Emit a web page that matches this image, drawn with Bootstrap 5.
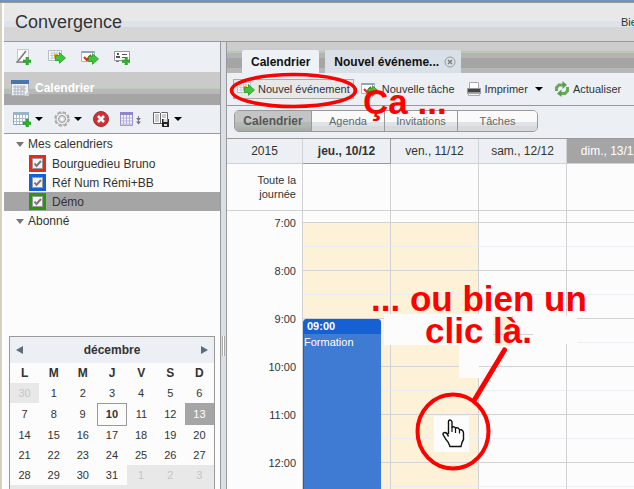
<!DOCTYPE html>
<html lang="fr">
<head>
<meta charset="utf-8">
<meta name="viewport" content="width=device-width, initial-scale=1">
<title>Convergence</title>
<link href="https://cdn.jsdelivr.net/npm/bootstrap@5.3.0/dist/css/bootstrap.min.css" rel="stylesheet">
<style>
body{font:11px/14px "Liberation Sans",Arial,sans-serif;color:#333;background:#fcfcfc;height:100vh}
svg{display:block;flex:none}
button{font:inherit;color:inherit;background:none;border:0;padding:0}
.topline{height:3px;background:#7094b8;border-bottom:1px solid #999;flex:none}
.frame-edge{width:4px;flex:none;background:#d6d0c2;border-left:1px solid #d6d0c2;border-right:2px solid #fff}
.brandbar{height:39px;flex:none;padding-left:11px;border-bottom:1px solid #999;background:linear-gradient(#e8e8e8 0 18px,#dde3e9 18px 24px,#d6d6d6 24px)}
.brandbar h1{font-size:18px;line-height:22px;margin:0;color:#333}
.greeting{width:13px;white-space:nowrap}
.sidebar{width:217px;flex:none;border-right:1px solid #999}
.toolrow{background:#ecf0f4}
.quick{height:30px;padding-left:11px;gap:15px}
.panel-title{height:33px;padding-left:7px;gap:5px;font-size:12px;font-weight:700;color:#fff;margin:0;background:linear-gradient(#cacaca 0 16px,#bccbba 16px 17px,#b9b9b9 17px 22px,#a5a5a5 22px)}
.manage{height:29px;padding-left:9px;gap:11px;border-bottom:1px solid #999}
.caret{width:0;height:0;border:4px solid transparent;border-top-color:#000;border-bottom:0}
.tree{font-size:12px;flex:1 1 0;min-height:0}
.tree-head{height:20px;padding-left:12px;gap:4px}
.tree-head::before{content:"";border:4px solid transparent;border-top:5px solid #777;border-bottom:0}
.tree-item{height:19px;padding-left:25px;gap:6px}
.tree-item.chosen{background:#a5a5a5}
.tree-item input{appearance:none;margin:0;width:17px;height:17px;border:3px solid var(--tone);background:#f4f4f4;outline:1px solid #999;outline-offset:-4px;flex:none}
.tickbox{display:grid}
.tickbox>*{grid-area:1/1}
.tickbox svg{margin:3px;pointer-events:none;position:relative}
.red-cal{--tone:#e8291c}.blue-cal{--tone:#1560d2}.green-cal{--tone:#259a10}
.monthbox{margin:0 5px 0 5px;border:1px solid #999;border-bottom:0;flex:none;height:153px;overflow:hidden}
.month-head{height:26px;background:#ecf0f4;font-size:12px;font-weight:700;padding:0 6px}
.month-head svg{fill:#5c6a7c}
.month{width:100%;table-layout:fixed;text-align:center;border-collapse:collapse}
.month th{font-size:12px;height:20px;padding:0}
.month td{height:20px;padding:0}
.month tr.tall td{height:22px}
.month .off{background:#e8e8e8;color:#c4c4c4}
.month td.today{border:1px solid #999;font-weight:700}
.month td.picked{background:#a5a5a5;color:#fff}
.splitter{width:5px;flex:none;background:#d9dfe6}
.grip{width:3px;height:20px;border:solid #aaa;border-width:0 1px;background:#fff;margin-top:294px}
.workspace{border-left:1px solid #999;min-width:0}
.tabstrip{height:31px;flex:none;padding-left:15px;gap:6px;background:linear-gradient(#ccc 0 9px,#b7cbb3 9px 11px,#b4b4b4 11px 16px,#a5a5a5 16px 26px,#b7b7b7 26px)}
.tabstrip button{height:23px;background:#d9e0e7;border-radius:2px 2px 0 0;font-size:12px;font-weight:700;color:#111;padding:0 9px;white-space:nowrap}
.tabstrip button.closable{gap:5px;padding-right:5px}
.tabstrip button.current{background:#eef1f5}
.actions{height:33px;flex:none;padding-left:6px;gap:3px;border-bottom:1px solid #999}
.actions button{height:20px;gap:3px;white-space:nowrap;padding:0 3px;border:1px solid transparent}
.actions button.hot{background:#e8e8e8;border-color:#aaa}
.views{height:33px;flex:none;padding:4px 7px;border-bottom:1px solid #999}
.view-set{border:1px solid #999;border-radius:5px;overflow:hidden;height:22px}
.view-set button{width:73px;color:#666;border-right:1px solid #999;background:linear-gradient(#fafafa 0 11px,#dde3e9 11px 15px,#d9d9d9 15px)}
.view-set button:first-child{width:77px;font-size:12px;font-weight:700;color:#555;background:linear-gradient(#c4c4c4 0 11px,#b4b9b4 11px 14px,#a3aba3)}
.view-set button:last-child{width:79px;border-right:0}
.week{width:100%;min-width:428px;table-layout:fixed;border-collapse:separate;border-spacing:0}
.week th,.week td{padding:0;border:solid #d2d2d4;border-width:0 1px 1px 0;font-weight:400}
.week col.hours{width:76px}
.week thead th{height:25px;font-size:12px;text-align:center;background:#ecf0f4}
.week thead th.now{font-weight:700;border-color:#999}
.week thead th.picked{background:#a5a5a5;color:#fff}
.week .allday th{height:47px;text-align:right;padding-right:6px}
.week .edge td{height:12px}
.week .half td,.week .full td{height:24px}
.week .half td{border-bottom-color:#ebeff4}
.week .hour{border-bottom:0;text-align:right;padding-right:6px;vertical-align:middle}
.week .edge .hour{vertical-align:top;padding-top:5px}
.week td.open{background:#fdf2d8}
.event{position:absolute;inset:0 9px auto 0;height:240px;background:#3f7ad3;border-left:1px solid #1560d2;border-radius:4px 4px 0 0;overflow:hidden;color:#fff}
.event b{display:block;background:#1560d2;padding-left:3px;height:15px}
.event span{display:block;padding-top:1px}
.notes{position:absolute;left:0;top:0;pointer-events:none}
.notes text{font:700 35px "Liberation Sans",Arial,sans-serif;fill:#f00}
</style>
<script src="https://cdn.jsdelivr.net/npm/bootstrap@5.3.0/dist/js/bootstrap.bundle.min.js"></script>
</head>
<body class="d-flex flex-column overflow-hidden position-relative">
<svg width="0" height="0" class="position-absolute" aria-hidden="true">
<symbol id="plus" viewBox="0 0 8 8"><path d="M3 0h2.4v3H8v2.400H5.400V8H3V5.400H0V3h3z" fill="#2fb52a" stroke="#188a18" stroke-width=".5"/></symbol>
<symbol id="go" viewBox="0 0 11 12"><path d="M.5 3.500h4V.700L10.500 6l-6 5.300V8.500h-4z" fill="#3fc43a" stroke="#249a25" stroke-width=".8"/></symbol>
<symbol id="newevent" viewBox="0 0 18 16"><path d="M.5 1.500h13v10H.5z" fill="#fafafa" stroke="#b4bcc4"/><path d="M2 4h10M2 6.500h10M2 9h10M4 2.500v8M6.500 2.500v8M9 2.500v8M11.500 2.500v8" stroke="#c2ccd8" fill="none"/><path d="M6 5h4v4H6z" fill="#f2a52b"/><use href="#go" x="7" y="3" width="11" height="12"/></symbol>
<symbol id="newtask" viewBox="0 0 18 16"><path d="M.5 2.500h13v10H.5z" fill="#fff" stroke="#a9b8c8"/><path d="M.5 3h13" stroke="#8fa6c0" stroke-width="2"/><path d="M3 8l3 3 4-5" fill="none" stroke="#d32" stroke-width="2.300"/><use href="#go" x="7" y="4" width="11" height="12"/></symbol>
</svg>
<div class="topline"></div>
<div class="d-flex flex-grow-1 overflow-hidden">
<div class="frame-edge"></div>
<div class="d-flex flex-column flex-grow-1 overflow-hidden">
<header class="brandbar d-flex align-items-center justify-content-between"><h1 class="fw-normal">Convergence</h1><span class="greeting">Bie</span></header>
<div class="d-flex flex-grow-1 overflow-hidden">

<aside class="sidebar d-flex flex-column">
<div class="toolrow quick d-flex align-items-center">
<button aria-label="Nouveau message"><svg width="18" height="18"><path d="M2.500 1.500h11v13h-11z" fill="#fafafa" stroke="#c4c8cc"/><path d="M1 14h7" stroke="#555"/><path d="M3 13L11 3" stroke="#777" stroke-width="1.500"/><use href="#plus" x="8" y="9" width="8" height="8"/></svg></button>
<button aria-label="Nouvel événement"><svg width="18" height="16"><use href="#newevent"/></svg></button>
<button aria-label="Nouvelle tâche"><svg width="18" height="16"><use href="#newtask"/></svg></button>
<button aria-label="Nouveau contact"><svg width="18" height="17"><path d="M.5 2.500h15v9H.5z" fill="#fff" stroke="#999"/><path d="M3 4h2v2H3zM2 7h4v2H2zM8 5h5v1H8zM8 8h3v1H8z" fill="#555"/><path d="M2 12.500h3" stroke="#777"/><use href="#plus" x="8" y="8" width="8" height="8"/></svg></button>
</div>
<h2 class="panel-title d-flex align-items-center"><svg width="19" height="17"><path d="M.5.500h17v15H.5z" fill="#eef1f5" stroke="#a9b4c2"/><path d="M0 0h18v4H0z" fill="#4a74ac"/><path d="M2 7h13M2 10h13M2 13h11M4 5v10M7 5v10M10 5v10M13 5v10" stroke="#adb6c4" fill="none"/><path d="M10 7h3v3h-3z" fill="#e4b5b0"/><path d="M13 16l5-5v5z" fill="#ccc"/></svg>Calendrier</h2>
<div class="toolrow manage d-flex align-items-center">
<button class="d-flex align-items-center gap-1" aria-label="Nouveau calendrier"><svg width="18" height="16"><path d="M.5 1.500h15v12H.5z" fill="#fff" stroke="#8ea3b5"/><path d="M0 2.500h16" stroke="#9db3c7" stroke-width="3"/><path d="M1 7.500h14M1 10.500h14M3.500 4v9M6.500 4v9M9.500 4v9M12.500 4v9" stroke="#aebcc8"/><use href="#plus" x="10" y="8" width="8" height="8"/></svg><span class="caret"></span></button>
<button class="d-flex align-items-center gap-1" aria-label="Options"><svg width="16" height="16"><circle cx="8" cy="8" r="6.500" fill="none" stroke="#aaa" stroke-width="2.600" stroke-dasharray="3.100 2"/><circle cx="8" cy="8" r="6" fill="#f1f1f1" stroke="#aaa"/><circle cx="8" cy="8" r="3.500" fill="#ddd" stroke="#999"/><circle cx="8" cy="8" r="1.500" fill="#fff"/></svg><span class="caret"></span></button>
<button aria-label="Supprimer"><svg width="16" height="16"><circle cx="8" cy="8" r="7.500" fill="#cf3038" stroke="#a52b30"/><path d="M5 5l6 6M11 5l-6 6" stroke="#fff" stroke-width="2.600"/></svg></button>
<button aria-label="Affichage"><svg width="22" height="16"><path d="M.5 1.500h12v13H.5z" fill="#f6f4ff" stroke="#9a93cf"/><path d="M0 2.500h13" stroke="#8f87cc" stroke-width="3"/><path d="M1 7h11M1 10h11M1 13h11M3.500 4v11M6.500 4v11M9.500 4v11" stroke="#b4aee0"/><path d="M16 7h5l-2.500 3zM16 10.500h5L18.500 13.500zM18 5h1v6h-1z" fill="#777"/></svg></button>
<button class="d-flex align-items-center gap-1" aria-label="Importer"><svg width="17" height="16"><path d="M.5 1.500h6l1 1 1-1h6v11H.5zM7.500 2v10" fill="#fff" stroke="#666"/><path d="M2 4h4M2 6h4M2 8h4M2 10h4M9 4h4M9 6h4" stroke="#999"/><path d="M9 8h7v8H9z" fill="#222"/><path d="M10.500 8h4v3h-4zM11 13h3v2h-3z" fill="#ddd"/></svg><span class="caret"></span></button>
</div>
<div class="tree">
<div class="tree-head d-flex align-items-center">Mes calendriers</div>
<label class="tree-item red-cal d-flex align-items-center"><span class="tickbox"><input type="checkbox" checked><svg width="11" height="11"><path d="M2.500 5.500l2 2.500L9 3" fill="none" stroke="#777" stroke-width="2"/></svg></span>Bourguedieu Bruno</label>
<label class="tree-item blue-cal d-flex align-items-center"><span class="tickbox"><input type="checkbox" checked><svg width="11" height="11"><path d="M2.500 5.500l2 2.500L9 3" fill="none" stroke="#777" stroke-width="2"/></svg></span>Réf Num Rémi+BB</label>
<label class="tree-item green-cal chosen d-flex align-items-center"><span class="tickbox"><input type="checkbox" checked><svg width="11" height="11"><path d="M2.500 5.500l2 2.500L9 3" fill="none" stroke="#777" stroke-width="2"/></svg></span>Démo</label>
<div class="tree-head d-flex align-items-center">Abonné</div>
</div>
<section class="monthbox">
<div class="month-head d-flex align-items-center justify-content-between"><button aria-label="Mois précédent"><svg width="7" height="8"><path d="M7 0v8L0 4z"/></svg></button>décembre<button aria-label="Mois suivant"><svg width="7" height="8"><path d="M0 0v8l7-4z"/></svg></button></div>
<table class="month">
<thead><tr><th>L</th><th>M</th><th>M</th><th>J</th><th>V</th><th>S</th><th>D</th></tr></thead>
<tbody>
<tr><td class="off">30</td><td>1</td><td>2</td><td>3</td><td>4</td><td>5</td><td>6</td></tr>
<tr class="tall"><td>7</td><td>8</td><td>9</td><td class="today">10</td><td>11</td><td>12</td><td class="picked">13</td></tr>
<tr><td>14</td><td>15</td><td>16</td><td>17</td><td>18</td><td>19</td><td>20</td></tr>
<tr><td>21</td><td>22</td><td>23</td><td>24</td><td>25</td><td>26</td><td>27</td></tr>
<tr><td>28</td><td>29</td><td>30</td><td>31</td><td class="off">1</td><td class="off">2</td><td class="off">3</td></tr>
<tr><td class="off" colspan="7"></td></tr>
</tbody></table>
</section>
</aside>
<div class="splitter d-flex justify-content-center"><div class="grip"></div></div>

<main class="workspace d-flex flex-column flex-grow-1 overflow-hidden">
<nav class="tabstrip d-flex align-items-end">
<button class="current">Calendrier</button>
<button class="closable d-flex align-items-center">Nouvel événeme...<svg width="12" height="12"><circle cx="6" cy="6" r="5" fill="none" stroke="#999"/><path d="M4 4l4 4M8 4L4 8" stroke="#777" stroke-width="1.300"/></svg></button>
</nav>
<div class="toolrow actions d-flex align-items-center">
<button class="hot d-flex align-items-center"><svg width="18" height="16"><use href="#newevent"/></svg>Nouvel événement</button>
<button class="d-flex align-items-center"><svg width="18" height="16"><use href="#newtask"/></svg>Nouvelle tâche</button>
<button class="d-flex align-items-center"><svg width="16" height="16"><path d="M3.500 1.500h9v6h-9z" fill="#fff" stroke="#aaa"/><path d="M1 7h14v6H1z" fill="#999"/><path d="M2 8h12v3H2z" fill="#444"/><path d="M2.500 12.500h11v2h-11z" fill="#f4f4f4" stroke="#aaa"/></svg>Imprimer<span class="caret ms-1"></span></button>
<button class="d-flex align-items-center"><svg width="16" height="16" fill="none" stroke="#68a85c" stroke-width="3"><path d="M2.500 10V6.500L5 4h4M13.500 6v4L11 12.500H7"/><path d="M8.500 0l4.500 4-4.500 4zM7.500 8.500L3 12.500l4.500 3.500z" fill="#5c9e50" stroke="none"/></svg>Actualiser</button>
</div>
<div class="toolrow views d-flex"><div class="view-set d-flex"><button>Calendrier</button><button>Agenda</button><button>Invitations</button><button>Tâches</button></div></div>
<table class="week">
<colgroup><col class="hours"><col><col><col><col></colgroup>
<thead><tr><th>2015</th><th class="now">jeu., 10/12</th><th>ven., 11/12</th><th>sam., 12/12</th><th class="picked">dim., 13/12</th></tr></thead>
<tbody>
<tr class="allday"><th>Toute la<br>journée</th><td></td><td></td><td></td><td></td></tr>
<tr class="edge"><th class="hour" rowspan="2">7:00</th><td></td><td></td><td></td><td></td></tr>
<tr class="half"><td class="open"></td><td class="open"></td><td></td><td></td></tr>
<tr class="full"><th class="hour" rowspan="2">8:00</th><td class="open"></td><td class="open"></td><td></td><td></td></tr>
<tr class="half"><td class="open"></td><td class="open"></td><td></td><td></td></tr>
<tr class="full"><th class="hour" rowspan="2">9:00</th><td class="open"></td><td class="open"></td><td></td><td></td></tr>
<tr class="half"><td class="open position-relative"><div class="event"><b>09:00</b><span>Formation</span></div></td><td class="open"></td><td></td><td></td></tr>
<tr class="full"><th class="hour" rowspan="2">10:00</th><td class="open"></td><td class="open"></td><td></td><td></td></tr>
<tr class="half"><td class="open"></td><td class="open"></td><td></td><td></td></tr>
<tr class="full"><th class="hour" rowspan="2">11:00</th><td class="open"></td><td class="open"></td><td></td><td></td></tr>
<tr class="half"><td class="open"></td><td class="open"></td><td></td><td></td></tr>
<tr class="full"><th class="hour" rowspan="2">12:00</th><td class="open"></td><td class="open"></td><td></td><td></td></tr>
<tr class="half"><td class="open"></td><td class="open"></td><td></td><td></td></tr>
<tr class="full"><th class="hour"></th><td class="open"></td><td class="open"></td><td></td><td></td></tr>
</tbody></table>
</main>
</div></div></div>

<svg class="notes" width="634" height="489" viewBox="0 0 634 489">
<g fill="#fcfcfc"><path d="M384 314h105v31H384zM513 316h64v28h-64zM459 345h20v33h-20zM434 416h35v36h-35zM489 316h4v29h-4z"/></g>
<path d="M493 316h19v30h-19z" fill="#fdf2d8"/><path d="M493 334.500h40M512.500 316v3" stroke="#d2d2d4"/>
<g fill="none" stroke="#f00"><ellipse cx="293.500" cy="90.500" rx="62" ry="16" stroke-width="3.500"/><ellipse cx="453" cy="431.500" rx="35.500" ry="37" stroke-width="4"/><path d="M504.500 350L475 399" stroke-width="5" stroke-linecap="round"/></g>
<path d="M448.500 434v-12q0-2 1.500-2t2 2v5q2-1 3.500 1 2.500-1 4 1.500 4 0 4 4v6q-2 3-2.500 7h-11q-1-4-4-7l-3-5q0-2 2-2 2 0 3.500 4" fill="#fff" stroke="#111" stroke-width="1.400"/><path d="M452 427v5M455.500 428v5M459.500 429.500v4" stroke="#111" stroke-width="1.200"/>
<text x="363" y="114">Ça ...</text><text x="371" y="311">... ou bien un</text><text x="425" y="343">clic là.</text>
</svg>
</body>
</html>
